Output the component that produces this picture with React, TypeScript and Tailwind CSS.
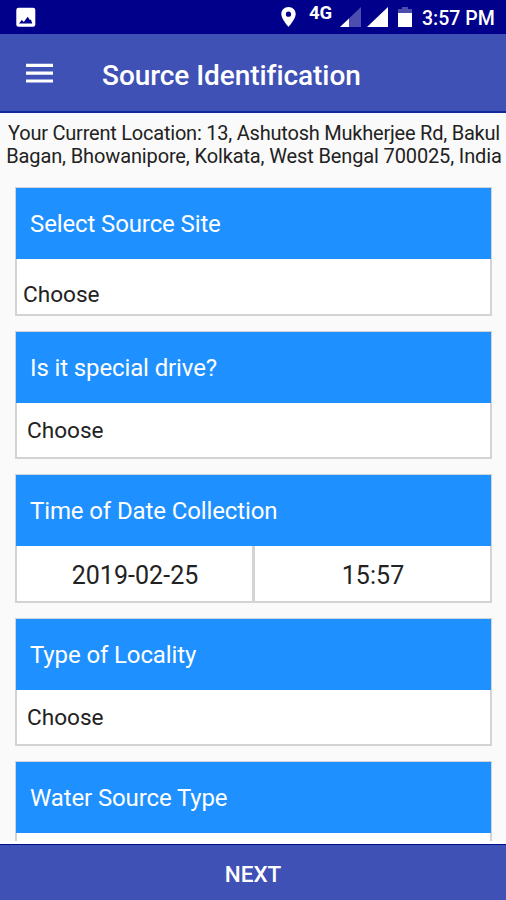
import React from 'react'

const sections = [
  { title: 'Select Source Site', values: ['Choose'], cell: 'pl-[6px] pt-[17px]' },
  { title: 'Is it special drive?', values: ['Choose'], cell: 'pl-[10px] pt-[3px]' },
  { title: 'Time of Date Collection', values: ['2019-02-25', '15:57'], cell: '' },
  { title: 'Type of Locality', values: ['Choose'], cell: 'pl-[10px] pt-[3px]' },
  { title: 'Water Source Type', values: [], cell: '' }
]

const StatusBar = () => (
  <div className="flex h-[34px] shrink-0 items-center justify-between bg-[#00008b] pl-4 pr-[11px] text-white">
    <svg className="h-5 w-5" viewBox="0 0 20 20" fill="none">
      <rect x="0.3" y="0.8" width="19" height="19" rx="2.2" fill="#fff" />
      <path d="M3 16.500l2.800-3.500 2 1.900 3.900-5.200 2.200 3.300 1-.6 1.400 4.100z" fill="#00008b" />
    </svg>
    <div className="flex items-center">
      <svg className="mr-[13px] h-5 w-[15px]" viewBox="0 0 15 20" fill="#fff">
        <path
          fillRule="evenodd"
          d="M7.5 0C3.4 0 .3 3.1.3 7.1c0 5 7.2 12.9 7.2 12.9s7.2-7.900 7.200-12.900C14.700 3.100 11.600 0 7.500 0zm0 4.600a2.600 2.600 0 1 1 0 5.200 2.600 2.600 0 0 1 0-5.200z"
        />
      </svg>
      <span className="mb-2 mr-[7px] w-6 whitespace-nowrap text-[18.500px] font-bold leading-none">4G</span>
      <svg className="mr-[6px] h-5 w-[21px]" viewBox="0 0 21 20">
        <path d="M0 20L21 0v20z" fill="#4d4db0" />
        <path d="M0 20l9-8.600V20z" fill="#fff" />
      </svg>
      <svg className="mr-[10px] h-5 w-[21px]" viewBox="0 0 21 20">
        <path d="M0 20L21 0v20z" fill="#fff" />
      </svg>
      <svg className="mr-[10px] h-5 w-[14px]" viewBox="0 0 14 20">
        <path d="M4 0h6v2h4v4H0V2h4z" fill="#4d4db0" />
        <path d="M0 6h14v14H0z" fill="#fff" />
      </svg>
      <span className="w-[73px] whitespace-nowrap pt-[3px] text-[19.500px] font-medium leading-none">3:57 PM</span>
    </div>
  </div>
)

const App = () => {
  return (
    <div className="flex h-[900px] w-[506px] flex-col overflow-hidden bg-[#fafafa] font-['Roboto',sans-serif]">
      <StatusBar />

      {/* App bar */}
      <header className="flex h-[79px] shrink-0 items-center border-b-2 border-[#102a9a] bg-[#3f51b5] pl-[26px] text-white">
        <svg className="mr-[49px] mt-0.5 h-[21px] w-[27px]" viewBox="0 0 27 21" fill="#fff">
          <path d="M0 .8h27V4H0zM0 8.600h27v3.200H0zM0 16.400h27v3.200H0z" />
        </svg>
        <h1 className="whitespace-nowrap pt-[7px] text-[28px] font-medium leading-none tracking-[-0.06px]">
          Source Identification
        </h1>
      </header>

      <main className="flex min-h-0 flex-1 flex-col overflow-hidden">
        <p className="mt-[9px] h-[65px] shrink-0 pl-[2px] text-center text-[20px] leading-[23px] text-[#222]">
          <span className="block whitespace-nowrap tracking-[-0.22px]">
            Your Current Location: 13, Ashutosh Mukherjee Rd, Bakul
          </span>
          <span className="block whitespace-nowrap tracking-[-0.13px]">
            Bagan, Bhowanipore, Kolkata, West Bengal 700025, India
          </span>
        </p>

        <div className="flex flex-col gap-[15px] pl-[15px] pr-[14px]">
          {sections.map((section) => (
            <section key={section.title} className="h-[128.500px] shrink-0 border border-[#d0d3d8]">
              <h2 className="flex h-[71px] items-center bg-[#1e90ff] pl-[14px] pt-px text-[24px] tracking-[-0.12px] text-white">
                {section.title}
              </h2>
              <div className="flex h-[55.500px] border-x border-b border-[#d3d3d3] bg-white text-[#222]">
                {section.values.length > 1 ? (
                  section.values.map((value) => (
                    <div
                      key={value}
                      className="flex flex-1 items-center justify-center pl-px pt-[4px] text-[25px] tracking-[0.05px] last:border-l-[3px] last:border-[#d3d3d3]"
                    >
                      {value}
                    </div>
                  ))
                ) : (
                  <div className={`flex items-center text-[22.600px] ${section.cell}`}>{section.values[0]}</div>
                )}
              </div>
            </section>
          ))}
        </div>
      </main>

      <div className="h-[3px] shrink-0 bg-white"></div>
      <button className="h-14 shrink-0 border-t border-[#00108b] bg-[#3f51b5] pt-1 text-[22.500px] font-medium text-white">
        NEXT
      </button>
    </div>
  )
}

export default App
